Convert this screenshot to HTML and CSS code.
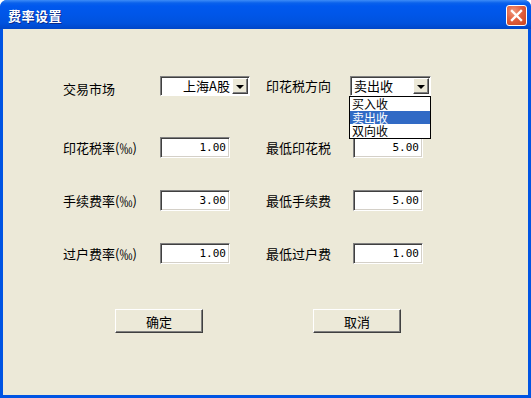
FILE: index.html
```html
<!DOCTYPE html>
<html lang="zh-CN">
<head>
    <meta charset="UTF-8" />
    <title>费率设置</title>
    <link rel="stylesheet" href="styles.css">
</head>
<body>
    <div class="window">
        <header class="titlebar">
            <span class="title">费率设置</span>
            <button class="close-btn" aria-label="关闭">
                <svg width="13" height="13" viewBox="0 0 13 13">
                    <path d="M2 2 L11 11 M11 2 L2 11" stroke="#fff" stroke-width="2.4" stroke-linecap="square" fill="none"/>
                </svg>
            </button>
        </header>

        <div class="client">
            <div class="form">
                <label class="label lead top label-market">交易市场</label>
                <div class="combo combo-market top">
                    <span class="combo-value right">上海A股</span>
                    <span class="combo-arrow"></span>
                </div>
                <span class="spacer"></span>
                <label class="label top label-dir">印花税方向</label>
                <div class="combo combo-dir top">
                    <span class="combo-value">卖出收</span>
                    <span class="combo-arrow"></span>
                    <ul class="dropdown">
                        <li>买入收</li>
                        <li class="selected">卖出收</li>
                        <li>双向收</li>
                    </ul>
                </div>

                <label class="label lead">印花税率(‰)</label>
                <input class="num" value="1.00">
                <span class="spacer"></span>
                <label class="label">最低印花税</label>
                <input class="num num-right" value="5.00">

                <label class="label lead">手续费率(‰)</label>
                <input class="num" value="3.00">
                <span class="spacer"></span>
                <label class="label">最低手续费</label>
                <input class="num num-right" value="5.00">

                <label class="label lead">过户费率(‰)</label>
                <input class="num" value="1.00">
                <span class="spacer"></span>
                <label class="label">最低过户费</label>
                <input class="num num-right" value="1.00">
            </div>

            <div class="actions">
                <button class="btn">确定</button>
                <button class="btn">取消</button>
            </div>
        </div>
    </div>
</body>
</html>
```

FILE: styles.css
```css
:root {
    --face: #ece9d8;
    --frame: #0054e3;
    --select: #316ac5;
}
html, body {
    margin: 0;
    height: 100%;
}
body {
    background: #fff;
    font-family: "Noto Sans CJK SC", "Liberation Sans", sans-serif;
    font-size: 13px;
    color: #000;
}
.window {
    width: 531px;
    height: 398px;
    display: flex;
    flex-direction: column;
    background: var(--frame);
    border-radius: 7px 7px 0 0;
    overflow: hidden;
}
.titlebar {
    height: 29px;
    flex-shrink: 0;
    display: flex;
    align-items: center;
    justify-content: space-between;
    padding: 0 4px 0 8px;
    background: linear-gradient(#3d8cf7 0, #0a61ec 3px, #0058ee 6px, #0056e8 50%, #0052de 80%, #0046c8 100%);
}
.title {
    color: #fff;
    font-weight: 700;
    font-size: 13px;
    letter-spacing: 0.5px;
    text-shadow: 1px 1px 0 #0a2a8a;
    margin-top: 1px;
}
.close-btn {
    width: 21px;
    height: 21px;
    padding: 0;
    margin-top: 2px;
    border: 1px solid #fff;
    border-radius: 3px;
    background: radial-gradient(circle at 35% 30%, #f09a7e 0, #e2603f 45%, #c9431f 100%);
    display: flex;
    align-items: center;
    justify-content: center;
}
.client {
    flex: 1;
    margin: 0 3px 3px 3px;
    background: var(--face);
    padding: 47px 0 0 57px;
}
.form {
    display: grid;
    grid-template-columns: 100px 90px 16px 84px 81px;
    grid-template-rows: 29px 21px 21px 21px;
    row-gap: 32px;
    align-items: center;
}
.top {
    align-self: start;
}
.label {
    white-space: nowrap;
    line-height: 16px;
}
.lead {
    padding-left: 3px;
}
.label-market {
    padding-top: 5px;
}
.label-dir {
    padding-top: 2px;
}
.combo {
    position: relative;
    height: 20px;
    box-sizing: border-box;
    background: #fff;
    border-top: 1px solid #808080;
    border-left: 1px solid #808080;
    border-right: 1px solid #fff;
    border-bottom: 1px solid #fff;
    box-shadow: inset 1px 1px 0 #404040;
    display: flex;
    align-items: center;
    padding: 1px 1px 1px 2px;
}
.combo-market {
    width: 90px;
}
.combo-dir {
    width: 81px;
}
.combo-value {
    flex: 1;
    line-height: 16px;
    padding-left: 1px;
}
.combo-value.right {
    text-align: right;
    padding-right: 2px;
}
.combo-arrow {
    width: 16px;
    height: 16px;
    box-sizing: border-box;
    background: var(--face);
    border-top: 1px solid #fff;
    border-left: 1px solid #fff;
    border-right: 1px solid #404040;
    border-bottom: 1px solid #404040;
    box-shadow: inset -1px -1px 0 #808080;
    display: flex;
    align-items: center;
    justify-content: center;
}
.combo-arrow::after {
    content: "";
    border-left: 4px solid transparent;
    border-right: 4px solid transparent;
    border-top: 4px solid #000;
    margin: 1px 1px 0 0;
}
.dropdown {
    position: absolute;
    top: 19px;
    left: -2px;
    width: 80px;
    margin: 0;
    padding: 0;
    list-style: none;
    background: #fff;
    border: 1px solid #000;
    z-index: 5;
}
.dropdown li {
    height: 13.5px;
    line-height: 13.5px;
    padding-left: 2px;
    font-size: 12px;
}
.dropdown li.selected {
    background: var(--select);
    color: #fff;
}
.num {
    width: 70px;
    height: 21px;
    box-sizing: border-box;
    margin: 0;
    padding: 0 3px 0 0;
    text-align: right;
    font-family: "DejaVu Sans Mono", "Liberation Mono", monospace;
    font-size: 11px;
    background: #fff;
    border-top: 1px solid #808080;
    border-left: 1px solid #808080;
    border-right: 1px solid #fff;
    border-bottom: 1px solid #fff;
    box-shadow: inset 1px 1px 0 #404040, inset -1px -1px 0 #d4d0c8;
    outline: none;
}
.num-right {
    margin-left: 3px;
}
.actions {
    display: flex;
    gap: 110px;
    margin: 45px 0 0 55px;
}
.btn {
    width: 88px;
    height: 24px;
    box-sizing: border-box;
    font-family: inherit;
    font-size: 13px;
    padding: 0;
    background: var(--face);
    border-top: 1px solid #fff;
    border-left: 1px solid #fff;
    border-right: 1px solid #404040;
    border-bottom: 1px solid #404040;
    box-shadow: inset -1px -1px 0 #808080;
}
```
